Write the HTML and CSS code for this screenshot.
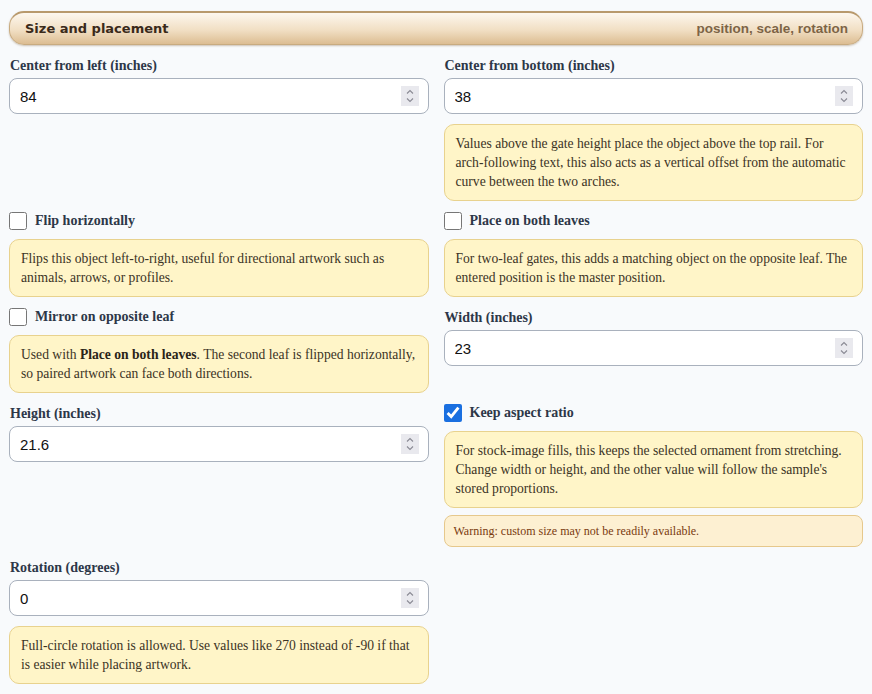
FILE: index.html
```html
<!DOCTYPE html>
<html lang="en">

<head>
    <meta charset="UTF-8">
    <meta name="viewport" content="width=device-width, initial-scale=1.0">
    <title>Size and placement</title>
    <link rel="stylesheet" href="styles.css">
</head>

<body>
    <div class="section-head">
        <span class="section-title">Size and placement</span>
        <span class="section-sub">position, scale, rotation</span>
    </div>

    <div class="field-grid">
        <div class="field">
            <label class="field-label" for="cx">Center from left (inches)</label>
            <div class="num-wrap">
                <input class="num-input" id="cx" type="number" value="84">
                <span class="spin"><svg viewBox="0 0 10 18" width="10" height="18"><path d="M2 6.5 5 3.5 8 6.5M2 11.5 5 14.5 8 11.5"/></svg></span>
            </div>
        </div>
        <div class="field">
            <label class="field-label" for="cy">Center from bottom (inches)</label>
            <div class="num-wrap">
                <input class="num-input" id="cy" type="number" value="38">
                <span class="spin"><svg viewBox="0 0 10 18" width="10" height="18"><path d="M2 6.5 5 3.5 8 6.5M2 11.5 5 14.5 8 11.5"/></svg></span>
            </div>
            <div class="note">Values above the gate height place the object above the top rail. For arch-following text, this also acts as a vertical offset from the automatic curve between the two arches.</div>
        </div>

        <div class="field">
            <label class="check-row"><input type="checkbox"> Flip horizontally</label>
            <div class="note">Flips this object left-to-right, useful for directional artwork such as animals, arrows, or profiles.</div>
        </div>
        <div class="field">
            <label class="check-row"><input type="checkbox"> Place on both leaves</label>
            <div class="note">For two-leaf gates, this adds a matching object on the opposite leaf. The entered position is the master position.</div>
        </div>

        <div class="field">
            <label class="check-row"><input type="checkbox"> Mirror on opposite leaf</label>
            <div class="note">Used with <b>Place on both leaves</b>. The second leaf is flipped horizontally, so paired artwork can face both directions.</div>
        </div>
        <div class="field">
            <label class="field-label" for="w">Width (inches)</label>
            <div class="num-wrap">
                <input class="num-input" id="w" type="number" value="23">
                <span class="spin"><svg viewBox="0 0 10 18" width="10" height="18"><path d="M2 6.5 5 3.5 8 6.5M2 11.5 5 14.5 8 11.5"/></svg></span>
            </div>
        </div>

        <div class="field">
            <label class="field-label" for="h">Height (inches)</label>
            <div class="num-wrap">
                <input class="num-input" id="h" type="number" value="21.6">
                <span class="spin"><svg viewBox="0 0 10 18" width="10" height="18"><path d="M2 6.5 5 3.5 8 6.5M2 11.5 5 14.5 8 11.5"/></svg></span>
            </div>
        </div>
        <div class="field">
            <label class="check-row"><input type="checkbox" checked> Keep aspect ratio</label>
            <div class="note">For stock-image fills, this keeps the selected ornament from stretching. Change width or height, and the other value will follow the sample's stored proportions.</div>
            <div class="warning">Warning: custom size may not be readily available.</div>
        </div>

        <div class="field">
            <label class="field-label" for="rot">Rotation (degrees)</label>
            <div class="num-wrap">
                <input class="num-input" id="rot" type="number" value="0">
                <span class="spin"><svg viewBox="0 0 10 18" width="10" height="18"><path d="M2 6.5 5 3.5 8 6.5M2 11.5 5 14.5 8 11.5"/></svg></span>
            </div>
            <div class="note">Full-circle rotation is allowed. Use values like 270 instead of -90 if that is easier while placing artwork.</div>
        </div>
    </div>
</body>

</html>
```

FILE: styles.css
```css
* {
    margin: 0;
    padding: 0;
    box-sizing: border-box;
}

body {
    background: #f8fafc;
    padding: 11px 9px;
    font-family: "Liberation Serif", "Times New Roman", serif;
    color: #2d3748;
}

.section-head {
    display: flex;
    justify-content: space-between;
    align-items: center;
    height: 34px;
    padding: 0 14px 0 15px;
    border: 1px solid #c8ab80;
    border-top: 2px solid #b8996c;
    border-radius: 15px;
    background: linear-gradient(to bottom, #fdf7ee 0%, #f1dfc4 55%, #dcbd92 100%);
    box-shadow: 0 1px 2px rgba(120, 90, 50, 0.35);
}

.section-title {
    font-family: "DejaVu Sans", Verdana, sans-serif;
    font-weight: bold;
    font-size: 13px;
    color: #3a2a1a;
}

.section-sub {
    font-family: "Liberation Sans", Arial, sans-serif;
    font-weight: bold;
    font-size: 13.5px;
    color: #7d6446;
}

.field-grid {
    display: grid;
    grid-template-columns: 1fr 1fr;
    column-gap: 15px;
    row-gap: 12px;
    margin-top: 12px;
    align-items: start;
}

.field {
    display: flex;
    flex-direction: column;
}

.field-label {
    font-weight: bold;
    font-size: 14px;
    line-height: 18px;
    margin-bottom: 3px;
    padding-left: 1px;
}

.num-wrap {
    position: relative;
}

.num-input {
    display: block;
    height: 36px;
    width: 100%;
    border: 1px solid #a9b1bd;
    border-radius: 8px;
    background: #fff;
    padding: 0 34px 0 10px;
    font-family: "Liberation Sans", Arial, sans-serif;
    font-size: 15px;
    color: #111;
    -moz-appearance: textfield;
}

.num-input::-webkit-inner-spin-button,
.num-input::-webkit-outer-spin-button {
    -webkit-appearance: none;
    margin: 0;
}

/* fake spinner, always visible like the windows one */
.spin {
    position: absolute;
    right: 10px;
    top: 8px;
    width: 18px;
    height: 20px;
    background: #e9e9ee;
    display: flex;
    align-items: center;
    justify-content: center;
}

.spin path {
    fill: none;
    stroke: #8a8a94;
    stroke-width: 1.1;
}

.check-row {
    display: flex;
    align-items: center;
    gap: 8px;
    font-weight: bold;
    font-size: 14px;
    line-height: 16px;
    height: 16px;
}

.check-row input {
    width: 18px;
    height: 18px;
    margin: 0;
    accent-color: #1a6fe0;
}

.note {
    margin-top: 10px;
    background: #fff5c8;
    border: 1px solid #e8d28e;
    border-radius: 10px;
    padding: 9px 10px 9px 11px;
    font-size: 13.6px;
    line-height: 19px;
    color: #3b3325;
}

.note b {
    color: #2a2418;
}

.warning {
    margin-top: 7px;
    background: #fdf0d2;
    border: 1px solid #e6c88c;
    border-radius: 8px;
    padding: 7px 9px;
    font-size: 12px;
    line-height: 16px;
    color: #7a3b10;
}
```
